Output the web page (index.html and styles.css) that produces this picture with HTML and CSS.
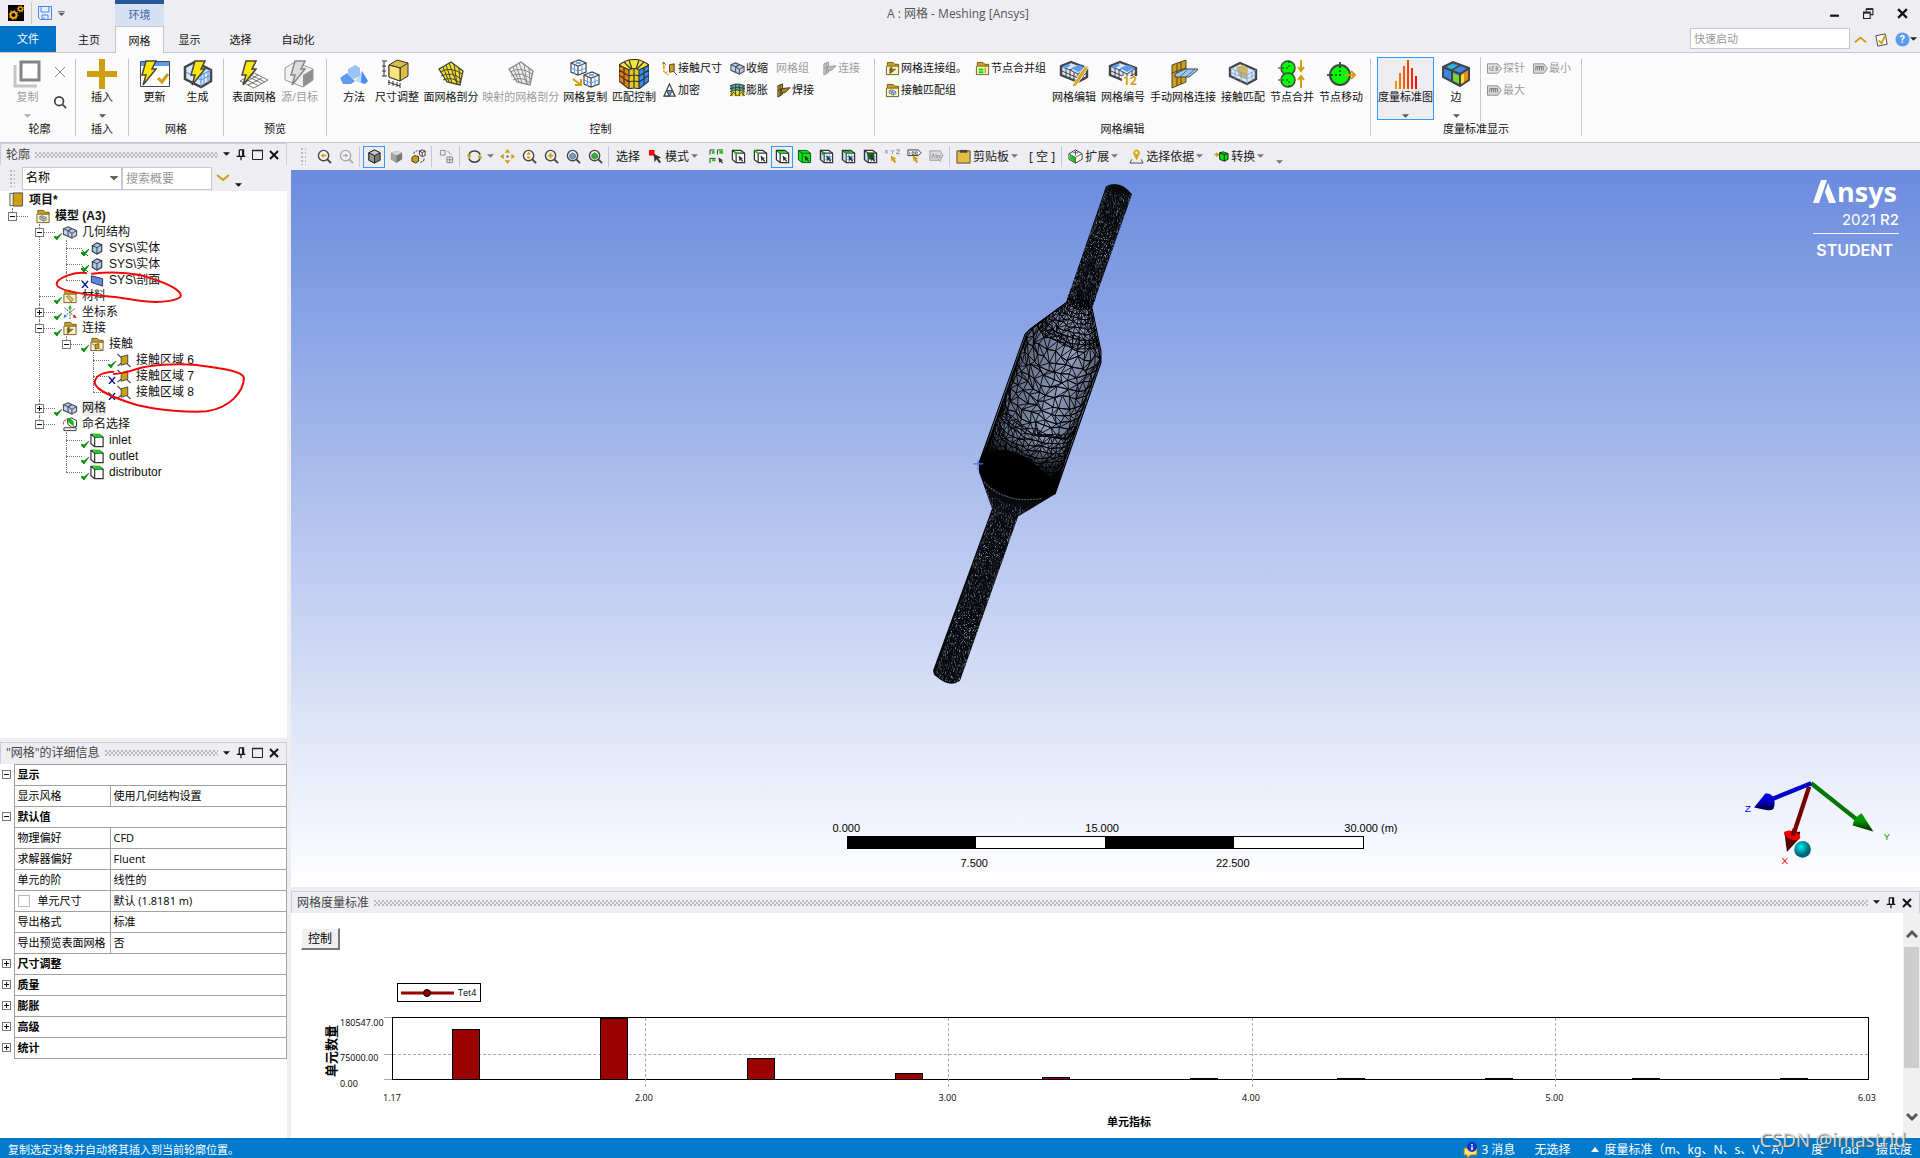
FILE: index.html
```html
<!DOCTYPE html>
<html lang="zh-CN">
<head>
<meta charset="utf-8">
<title>A : 网格 - Meshing [Ansys]</title>
<link rel="stylesheet" href="styles.css">
</head>
<body>
<svg class="defs" aria-hidden="true">
<defs>
<symbol id="caret" viewBox="0 0 8 5"><path d="M0 0h8L4 4z" fill="currentColor"/></symbol>
<symbol id="pin" viewBox="0 0 10 14"><path d="M3 1h5v7M3 1v7M7 1v7M0 8.500h10M5 9v4" fill="none" stroke="#111" stroke-width="1.400"/></symbol>
<symbol id="max" viewBox="0 0 12 12"><path d="M.5 1.500h10v9H.5z" fill="none" stroke="#222"/><path d="M0 1.500h11" stroke="#222" stroke-width="1.500"/></symbol>
<symbol id="x" viewBox="0 0 10 10"><path d="M1 1l8 8M9 1L1 9" stroke="currentColor" stroke-width="2"/></symbol>
<symbol id="bolt" viewBox="0 0 16 26"><path d="M5 1h10l-4 8h4L2 25l3-10H1z" fill="#ffe600" stroke="#444" stroke-width="1.500"/></symbol>
<symbol id="gbolt" viewBox="0 0 16 26"><path d="M5 1h10l-4 8h4L2 25l3-10H1z" fill="#ddd" stroke="#888" stroke-width="1.500"/></symbol>
<symbol id="i-copy" viewBox="0 0 30 30"><path d="M2 6v21h22" fill="none" stroke="#c4c4c4" stroke-width="3"/><path d="M8 3h18v18H8z" fill="#fff" stroke="#848484" stroke-width="3"/></symbol>
<symbol id="i-mag" viewBox="0 0 16 16"><circle cx="7" cy="7" r="5" fill="none" stroke="#444" stroke-width="2"/><path d="M11 11l4 4" stroke="#444" stroke-width="2"/></symbol>
<symbol id="i-plus" viewBox="0 0 30 30"><path d="M12 0h6v12h12v6H18v12h-6V18H0v-6h12z" fill="#cf9f10"/></symbol>
<symbol id="i-update" viewBox="0 0 30 30"><path d="M.5 2.500h29v25H.5z" fill="#fff" stroke="#444"/><path d="M1 3h28v4H1z" fill="#5b9bf0"/><path d="M18 19l4 4 6-8" fill="none" stroke="#cf9f10" stroke-width="3"/><use href="#bolt" x="1" y="1" width="16" height="26"/></symbol>
<symbol id="i-gen" viewBox="0 0 30 30"><path d="M2 8l10-5 16 8v11l-10 6L2 20z" fill="#dce8fb" stroke="#444" stroke-width="2.500"/><path d="M18 15v13M18 16l10-5M21 14v12M25 12v12M18 21l10-5M3 13l15 8" stroke="#4690f0" stroke-width="1"/><use href="#bolt" x="7" y="1" width="16" height="26"/></symbol>
<symbol id="i-surf" viewBox="0 0 30 30"><path d="M1 22l14-8 14 7-14 8zM5 19.500l14 7M9 17.500l14 7M12 16l14 7M5 24l14-8M9 26l14-7" fill="#fff" stroke="#555" stroke-width=".8"/><use href="#bolt" x="2" y="1" width="16" height="26"/></symbol>
<symbol id="i-src" viewBox="0 0 30 30"><path d="M1 9l10-6 18 7v11l-10 7L1 21z" fill="#f1f1f1" stroke="#999"/><path d="M19 16l10-6v11l-10 7z" fill="#909090"/><use href="#gbolt" x="6" y="1" width="16" height="26"/></symbol>
<symbol id="i-method" viewBox="0 0 30 30"><path d="M1 19l7-5 8 8-4 3H4z" fill="#5b9bf0"/><path d="M9 10l7-4 5 3v8l-6 3-6-4z" fill="#9cc2f8"/><path d="M17 22l6-10 6 10-3 3z" fill="#4a8bec"/><path d="M17 22l6-10-1 12z" fill="#c3dafa"/></symbol>
<symbol id="i-size" viewBox="0 0 30 30"><path d="M7 6l8-5 11 3v13l-8 5-11-4z" fill="#d9bd45" stroke="#333"/><path d="M7 6l11 3 8-5M18 9v13" fill="none" stroke="#333"/><path d="M7 6l11 3v13L7 18z" fill="#f8e47a" stroke="#333"/><path d="M2 2v15M0 2h5M0 7h4M0 12h4M0 17h5M6 23l12 4M7 21v5M11 22v5M15 23v5M18 24v5" fill="none" stroke="#333"/></symbol>
<symbol id="i-face" viewBox="0 0 30 30"><path d="M15 3l12 9-3 14-13-3L3 10z" fill="#f2dc1f" stroke="#444" stroke-width="1.300"/><path d="M4 13q11-6 22 2M5 17q11-5 20 3M7 21q9-4 17 3M10 6l6 18M13 4l8 21M7 8l6 15M18 5l3 20M23 9l1 14" fill="none" stroke="#444"/></symbol>
<symbol id="i-gface" viewBox="0 0 30 30"><path d="M15 3l12 9-3 14-13-3L3 10z" fill="#eee" stroke="#888" stroke-width="1.300"/><path d="M4 13q11-6 22 2M5 17q11-5 20 3M7 21q9-4 17 3M10 6l6 18M13 4l8 21M7 8l6 15M18 5l3 20M23 9l1 14" fill="none" stroke="#888"/></symbol>
<symbol id="wire" viewBox="0 0 17 17"><path d="M1 4l8-3 7 3v9l-8 3-7-3z" fill="#fff" stroke="#444" stroke-width="1.200"/><path d="M1 4l7 3 8-3M8 7v9" fill="none" stroke="#444" stroke-width="1.200"/><path d="M1 9l7 3 8-3M4.500 6v9M12 5.500v9M5 2.500l7 3M12 2.500L5 5.500" stroke="#5b9bf0" fill="none"/></symbol>
<symbol id="i-mcopy" viewBox="0 0 30 30"><use href="#wire" width="17" height="17"/><use href="#wire" x="13" y="12" width="17" height="17"/><path d="M3 20l8 6M11 20v6H5" fill="none" stroke="#cf9f10" stroke-width="2"/></symbol>
<symbol id="i-match" viewBox="0 0 30 30"><path d="M0 6l10 5v19L0 22z" fill="#f08010"/><path d="M20 11l10-5v16l-10 8z" fill="#2f8ff0"/><path d="M0 6Q15-5 30 6l-10 5q-5-3-10 0z" fill="#f6e63a"/><path d="M10 11q5-3 10 0v19q-5-2-10 0z" fill="#e3cc20"/><path d="M0 6Q15-5 30 6v16l-10 8q-5-2-10 0L0 22zM0 6l10 5q5-3 10 0l10-5M10 11v19M20 11v19M5 8v18M25 8v18M0 11l10 6q5-2 10 0l10-6M0 16l10 7q5-2 10 0l10-7M15 10v19M5 3l7 7M10 1l3 9M20 1l-3 9M25 3l-7 7" fill="none" stroke="#333" stroke-width="1.200"/></symbol>
<symbol id="s-csize" viewBox="0 0 16 16"><path d="M2 1v10l5 4M0 3h3M1 7h3M3 13l3-2" stroke="#cf9f10" stroke-width="1.500" fill="none" stroke-dasharray="2 1"/><path d="M8 4l5-1v8l-5 1z" fill="#cf9f10" stroke="#444"/><path d="M1 1l3 3M12 11l4 4" stroke="#444"/></symbol>
<symbol id="s-box" viewBox="0 0 16 16"><path d="M1 4l5-2 9 4v5l-5 3-9-4z" fill="#b9d2f5" stroke="#555" stroke-width="1.200"/><path d="M1 4l5 2 4 3 5-3M10 9v5M6 6v6M6 6l4-2" fill="none" stroke="#555" stroke-width="1.200"/></symbol>
<symbol id="s-tri" viewBox="0 0 16 16"><path d="M8 1l6 13H2z" fill="#fff" stroke="#444" stroke-width="1.300"/><path d="M8 14l-3-6h6z" fill="#5b9bf0" stroke="#444"/><path d="M5 9l3 5-5 0M11 9l3 5" stroke="#444" fill="none"/></symbol>
<symbol id="s-infl" viewBox="0 0 16 16"><path d="M0 3q8-4 16 0v5H0z" fill="#56a9a2"/><path d="M0 8h16v6H0z" fill="#efe13c"/><path d="M0 3q8-4 16 0M0 6q8-3 16 0M0 9q8-3 16 0M2 2v12M6 1v13M10 1v13M14 2v12M0 14l4-4 4 4 4-4 4 4" fill="none" stroke="#333" stroke-width=".9"/></symbol>
<symbol id="s-weld" viewBox="0 0 16 16"><path d="M2 3l5-2v11l-5 3z" fill="#cf9f10" stroke="#333"/><path d="M4.500 2v12M2 8l5-2" stroke="#333"/><path d="M6 6l9-1-5 5-5 1z" fill="#b77f13" stroke="#333"/></symbol>
<symbol id="s-gweld" viewBox="0 0 16 16"><path d="M2 3l5-2v11l-5 3z" fill="#ccc" stroke="#999"/><path d="M4.500 2v12M2 8l5-2" stroke="#999"/><path d="M6 6l9-1-5 5-5 1z" fill="#bbb" stroke="#999"/></symbol>
<symbol id="s-folder" viewBox="0 0 16 16"><path d="M2.500 5V1.500h6l2 2h4V6" fill="#cf9f10" stroke="#6d5a20"/><path d="M1.500 5.500h13v9h-13z" fill="#fdf6c4" stroke="#6d5a20"/></symbol>
<symbol id="s-fweld" viewBox="0 0 16 16"><use href="#s-folder"/><use href="#s-weld" x="3" y="6" width="10" height="8"/></symbol>
<symbol id="s-fbox" viewBox="0 0 16 16"><use href="#s-folder"/><use href="#s-box" x="3" y="6" width="10" height="8"/></symbol>
<symbol id="s-fnode" viewBox="0 0 16 16"><use href="#s-folder"/><path d="M4 8h5v2H4zM4 11h5v2H4z" fill="#0d0"/><path d="M11 7v6" stroke="#cf9f10" stroke-width="1.500"/></symbol>
<symbol id="s-fmat" viewBox="0 0 16 16"><use href="#s-folder"/><path d="M4 8l3-1 5 4-3 3z" fill="#e2b27a" stroke="#8a6a42" stroke-width=".7"/></symbol>
<symbol id="s-fcont" viewBox="0 0 16 16"><use href="#s-folder"/><path d="M6 8l4-1v5l-4 1z" fill="#cf9f10" stroke="#333" stroke-width=".7"/><path d="M3 7l2 2M11 12l2 2" stroke="#333"/></symbol>
<symbol id="meshbox" viewBox="0 0 30 24"><path d="M2 6l10-4 16 6v9l-9 5-17-7z" fill="#d9e8fd" stroke="#444" stroke-width="2.400"/><path d="M2 6l9 4 8 4 9-6M19 14v8M11 10v8M11 10l10-5M7 8v8M15 12v8M24 11v8M3 11l16 7 9-5" fill="none" stroke="#444"/><path d="M12 8l8-3 7 3-8 4zM3 7l6-3 3 1-6 4z" fill="#5b9bf0"/></symbol>
<symbol id="i-medit" viewBox="0 0 30 30"><use href="#meshbox" y="1" width="30" height="24"/><path d="M14 25l12-18 3 2-12 18-4 1z" fill="#d9a818" stroke="#fff" stroke-width=".7"/></symbol>
<symbol id="i-mnum" viewBox="0 0 30 30"><use href="#meshbox" y="1" width="30" height="24"/><path d="M14 17h16v10H14z" fill="#fbfbfb"/><text x="15" y="26" class="icon-num">12</text></symbol>
<symbol id="i-manual" viewBox="0 0 30 30"><path d="M4 6l14-5v22L4 29z" fill="#cf9f10" stroke="#444"/><path d="M9 4v23M13 3v22M4 14l14-5" stroke="#444"/><path d="M7 15l10-5h14l-10 8H7z" fill="#9cc6f8" stroke="#444"/><path d="M12 18l8-8M18 18l9-8" stroke="#444" stroke-width=".7"/></symbol>
<symbol id="i-cmatch" viewBox="0 0 30 30"><path d="M2 9l10-5 16 7v9l-9 5-17-8z" fill="#d9e8fd" stroke="#444" stroke-width="2.400"/><path d="M8 8l8-2 4 4-1 10-8-3z" fill="#c7b46a"/><path d="M2 9l17 7 9-5M19 16v9M2 13l17 7 9-5M7 11v9M13 14v9M24 13v9" stroke="#7a9ad0" fill="none" stroke-width=".8"/></symbol>
<symbol id="i-nmerge" viewBox="0 0 30 30"><circle cx="11" cy="9" r="7" fill="#0f0" stroke="#444" stroke-width="1.500"/><circle cx="11" cy="21" r="7" fill="#0f0" stroke="#444" stroke-width="1.500"/><path d="M1 9h11V0M1 21h11v9" fill="none" stroke="#222" stroke-dasharray="2 2"/><path d="M24 1v10M21 8l3 4 3-4M24 29V18M21 21l3-4 3 4" fill="none" stroke="#cf9f10" stroke-width="2"/></symbol>
<symbol id="i-nmove" viewBox="0 0 30 30"><circle cx="14" cy="16" r="10" fill="#0f0" stroke="#444" stroke-width="2"/><path d="M1 16h13V3" fill="none" stroke="#222" stroke-width="1.500" stroke-dasharray="2 2"/><path d="M19 16h9M25 12l4 4-4 4" fill="none" stroke="#cf9f10" stroke-width="2"/></symbol>
<linearGradient id="fire" x1="0" x2="1"><stop offset="0" stop-color="#f79a00"/><stop offset="1" stop-color="#f00"/></linearGradient>
<symbol id="i-chart" viewBox="0 0 30 30"><path d="M4 22h2v8H4zM8 14h2v16H8zM12 7h2v23h-2zM16 1h2v29h-2zM20 9h2v21h-2zM24 17h2v13h-2z" fill="url(#fire)"/></symbol>
<symbol id="i-edge" viewBox="0 0 30 30"><path d="M2 8l10-5 16 6v12l-9 6L2 18z" fill="#3b86e8"/><path d="M4 9l7-4 8 3-7 4z" fill="#30b7d8"/><path d="M12 14l7 3v8l-7-3z" fill="#7bd72e"/><path d="M19 17l4-3v10l-4 2z" fill="#f4e51c"/><path d="M23 14l4-3v10l-4 3z" fill="#f08a1c"/><path d="M2 8l10-5 16 6v12l-9 6L2 18zM2 8l17 7 9-6M19 15v12M11 11v11M11 11l9-5" fill="none" stroke="#444" stroke-width="2"/></symbol>
<symbol id="tag" viewBox="0 0 16 12"><path d="M.5 1h11l4 5-4 5H.5z" fill="#e3e3e3" stroke="#8b8b8b"/><path d="M3 4v4M5 4h2l-2 4h2M9 4h2v4H9M9 6h2" fill="none" stroke="#888"/></symbol>
<symbol id="gtag" viewBox="0 0 16 12"><path d="M.5 1h11l4 5-4 5H.5z" fill="#d9d9d9" stroke="#8b8b8b"/><path d="M3 4v4M5 4v4M7 4v4M9 4v4M11 4v4M3 4h8" fill="none" stroke="#777"/></symbol>
<symbol id="z" viewBox="0 0 16 16"><circle cx="7" cy="7" r="5.500" fill="#f7f7f7" stroke="currentColor" stroke-width="1.500"/><path d="M11 11l4 4" stroke="currentColor" stroke-width="2"/></symbol>
<symbol id="t-zb" viewBox="0 0 16 16"><use href="#z"/><path d="M4 7l3-2.500v1.700h3v1.600H7v1.700z" fill="#cf9f10"/></symbol>
<symbol id="t-zf" viewBox="0 0 16 16"><use href="#z"/><path d="M10 7L7 4.500v1.700H4v1.600h3v1.700z" fill="#aaa"/></symbol>
<symbol id="t-zp" viewBox="0 0 16 16"><use href="#z"/><path d="M7 4v6M4 7h6" stroke="#cf9f10" stroke-width="1.800"/></symbol>
<symbol id="t-zu" viewBox="0 0 16 16"><use href="#z"/><path d="M7 3l2.500 3h-5zM7 11L4.500 8h5z" fill="#cf9f10"/></symbol>
<symbol id="t-zc" viewBox="0 0 16 16"><use href="#z"/><path d="M4 6l3-2 3 2v3l-3 2-3-2z" fill="#6c9fdc" stroke="#333" stroke-width=".6"/></symbol>
<symbol id="t-zg" viewBox="0 0 16 16"><use href="#z"/><path d="M4 6l3-2 3 2v3l-3 2-3-2z" fill="#29bd2b" stroke="#333" stroke-width=".6"/></symbol>
<symbol id="t-cube" viewBox="0 0 16 16"><path d="M2 4l6-3 6 3v8l-6 3-6-3z" fill="#777" stroke="#222"/><path d="M2 4l6 3v8l-6-3z" fill="#999" stroke="#222"/><path d="M2 4l6-3 6 3-6 3z" fill="#c7c7c7" stroke="#222"/></symbol>
<symbol id="t-cube2" viewBox="0 0 16 16"><path d="M2 4l6-2 6 2v7l-6 4-6-4z" fill="#777"/><path d="M2 4l6 3v8l-6-4z" fill="#a2a2a2"/><path d="M2 4l6-2 6 2-6 3z" fill="#d6d6d6"/></symbol>
<symbol id="t-swap" viewBox="0 0 16 16"><path d="M1 9l3-2 4 1v5l-3 2-4-2z" fill="#cf9f10" stroke="#333"/><path d="M9 2l3-1 3 1v5l-3 1-3-2zM9 2l3 2 3-2M12 4v4" fill="#fff" stroke="#333"/><path d="M3 5q0-3 4-3M14 10q0 4-4 4" fill="none" stroke="#333" stroke-dasharray="3 1"/></symbol>
<symbol id="t-exp" viewBox="0 0 16 16"><path d="M1.500 1.500h5v5h-5zM8.500 8.500h6v6h-6zM11.500 8v7M8 11.500h7M9 2l4 4" fill="none" stroke="#888"/></symbol>
<symbol id="t-rot" viewBox="0 0 16 16"><path d="M2 6a6.500 6.500 0 0 1 12 0M14 10a6.500 6.500 0 0 1-12 0" fill="none" stroke="#444" stroke-width="1.600"/><path d="M0 6h4v3H1zM12 7h3l1 3h-4z" fill="#cf9f10"/></symbol>
<symbol id="t-pan" viewBox="0 0 16 16"><path d="M8 0l3 4H5zM8 16l3-4H5zM0 8l4-3v6zM16 8l-4-3v6z" fill="#cf9f10"/><path d="M7 7h2v2H7z" fill="#444"/></symbol>
<symbol id="t-mode" viewBox="0 0 16 16"><path d="M1 1h6v6H1z" fill="#f00"/><path d="M6 5l8 4-3 1 3 4-2 1-3-4-2 3z" fill="#333"/></symbol>
<symbol id="c" viewBox="0 0 16 16"><path d="M1.500 1.500h9l4 3v10h-9l-4-3z" fill="#fff" stroke="#333" stroke-width="1.300"/><path d="M1.500 1.500l4 3h9M5.500 4.500v10" fill="none" stroke="#333" stroke-width="1.300"/></symbol>
<symbol id="ar" viewBox="0 0 16 16"><path d="M8 7l5 3-2 .5 2 2-1 1-2-2-1 1.500z" fill="#333"/></symbol>
<symbol id="t-all" viewBox="0 0 16 16"><path d="M1 6V1h5M9 6V1h6M1 15v-5h6" fill="none" stroke="#333"/><path d="M3 2h3v3H3zM11 2h4v3h-4zM3 11h4v2H3z" fill="#0d0"/><use href="#ar" x="2" y="2"/></symbol>
<symbol id="t-v" viewBox="0 0 16 16"><use href="#c"/><path d="M4 3h3v3H4z" fill="#0c0"/><use href="#ar"/></symbol>
<symbol id="t-e" viewBox="0 0 16 16"><use href="#c"/><path d="M1 1h2l4 4H5z" fill="#0e0"/><use href="#ar"/></symbol>
<symbol id="t-f" viewBox="0 0 16 16"><use href="#c"/><path d="M2 2h8l3 2H5z" fill="#0e0"/><use href="#ar"/></symbol>
<symbol id="t-b" viewBox="0 0 16 16"><path d="M1.500 1.500h9l4 3v10h-9l-4-3z" fill="#0e0" stroke="#143"/><path d="M1.500 1.500l4 3h9M5.500 4.500v10" fill="none" stroke="#143"/><use href="#ar"/></symbol>
<symbol id="mc" viewBox="0 0 16 16"><use href="#c"/><path d="M6 8h8M6 11h8M8.500 5v9M11.500 5v9M3 3v9" stroke="#4690f0" stroke-width=".8"/></symbol>
<symbol id="t-n1" viewBox="0 0 16 16"><use href="#mc"/><path d="M3 3h3v3H3z" fill="#0a0"/><use href="#ar"/></symbol>
<symbol id="t-n2" viewBox="0 0 16 16"><use href="#mc"/><path d="M3 2h8l2 3H6z" fill="#3a3"/><use href="#ar"/></symbol>
<symbol id="t-n3" viewBox="0 0 16 16"><use href="#mc"/><path d="M4 4h8v7H6z" fill="#195e19"/><use href="#ar"/></symbol>
<symbol id="t-xyz" viewBox="0 0 16 16"><path d="M0 1l3 4M3 1L0 5M6 1l2 2 2-2M8 3v2M12 1h4l-4 4h4" fill="none" stroke="#777" stroke-width=".8"/><path d="M6 7l6 3-2 1 2 3-2 1-2-3-1 1z" fill="#cf9f10"/></symbol>
<symbol id="t-tag" viewBox="0 0 16 16"><path d="M1 1h11l3 3-3 3H1z" fill="#fff" stroke="#333"/><path d="M3 3v3M5.500 3h2v3h-2zM9 3h2v3H9z" stroke="#333" stroke-width=".7" fill="none"/><path d="M6 7l6 3-2 1 2 3-2 1-2-3-1 1z" fill="#cf9f10"/></symbol>
<symbol id="t-abc" viewBox="0 0 16 16"><path d="M1 2h11l3 5-3 5H1z" fill="#ddd" stroke="#999"/><path d="M3 10l1.500-5L6 10M7.500 5v4h2V7h-2M13 7h-2v2h2M9 10l4 4" fill="none" stroke="#999"/></symbol>
<symbol id="t-clip" viewBox="0 0 16 16"><path d="M1 2h14v13H1z" fill="#e6bd42" stroke="#444"/><path d="M4 1h8v3H4z" fill="#444"/></symbol>
<symbol id="t-ext" viewBox="0 0 16 16"><path d="M1 5l7-4 7 4v6l-7 4-7-4z" fill="#fff" stroke="#333"/><path d="M2 6l6 3v6l-6-4z" fill="#1c1"/><path d="M1 5l7 4 7-4M8 9v6M8 2v5M5 4h6" fill="none" stroke="#555"/></symbol>
<symbol id="t-by" viewBox="0 0 16 16"><path d="M8 12L5 6a3.500 3.500 0 1 1 6 0z" fill="#d9a818"/><circle cx="8" cy="4" r="1.300" fill="#fff"/><path d="M3 11l-2 4h14l-2-4" fill="none" stroke="#444"/></symbol>
<symbol id="t-conv" viewBox="0 0 16 16"><path d="M0 6h4M2 4l3 2-3 2" stroke="#cf9f10" stroke-width="1.500" fill="none"/><path d="M6 4l4-1 5 2v6l-4 2-5-2z" fill="#0d0" stroke="#222"/><path d="M6 4l5 2 4-1M11 6v7" fill="none" stroke="#222"/></symbol>
<symbol id="ok" viewBox="0 0 8 8"><path d="M0 5l3 3 5-7-5 4-2-1z" fill="#0a8f0a" stroke="#0a8f0a" stroke-width=".7"/></symbol>
<symbol id="okx" viewBox="0 0 8 8"><path d="M0 5l3 3 5-7-5 4-2-1zM1 2l6 6" fill="#0a8f0a" stroke="#0a8f0a"/></symbol>
<symbol id="no" viewBox="0 0 8 8"><path d="M1 1l6 7M7 1L1 8" stroke="#001c8c" stroke-width="1.400"/></symbol>
<symbol id="r-proj" viewBox="0 0 16 16"><path d="M1.500 1.500h13v13h-13z" fill="#f7f1df" stroke="#555"/><path d="M5 1h10v14H5z" fill="#cf9f10" stroke="#555"/></symbol>
<symbol id="r-body" viewBox="0 0 16 16"><path d="M3 5l5-3 5 2v7l-5 3-5-3z" fill="#a9c8f4" stroke="#333" stroke-width="1.200"/><path d="M3 5l5 2 5-3M8 7v7" fill="none" stroke="#333"/></symbol>
<symbol id="r-surf" viewBox="0 0 16 16"><path d="M2 3l12 3v8L2 10z" fill="#5a85e8" stroke="#333"/></symbol>
<symbol id="r-cs" viewBox="0 0 16 16"><path d="M8 1v14M2 3l12 10M2 12l11-8" stroke="#444" stroke-dasharray="2 1"/><path d="M8 0l2 4H6z" fill="#0c0"/><path d="M15 14l-4-1 2-3z" fill="#e11"/><path d="M1 14l1-4 3 2z" fill="#28f"/></symbol>
<symbol id="r-cr" viewBox="0 0 16 16"><path d="M5 4l7-2v9l-7 2z" fill="#cf9f10" stroke="#444"/><path d="M1 1l4 4M11 11l4 4M1 14l4-3" stroke="#444" stroke-width="1.300"/></symbol>
<symbol id="r-ns" viewBox="0 0 16 16"><path d="M5 2l5-1 5 3v6l-5 1-4-3z" fill="#fff" stroke="#222"/><path d="M5 2l3-1 4 4v5l-5-4z" fill="#1b1"/><path d="M1 8q0-5 3-5" stroke="#e22" fill="none"/><path d="M1.500 11.500h13v3h-13z" fill="#fff" stroke="#333"/></symbol>
<symbol id="r-sel" viewBox="0 0 16 16"><use href="#c"/><path d="M3 1h8l3 3H6z" fill="#0d0"/></symbol>
</defs>
</svg>

<header class="top">
  <div class="titlebar">
    <div class="access">
      <svg class="app" viewBox="0 0 16 16"><path d="M0 0h16v16H0z"/><circle cx="5.500" cy="10" r="3" fill="none" stroke="#f5a800" stroke-width="2"/><circle cx="5.500" cy="10" r="4.500" fill="none" stroke="#f5a800" stroke-width="1" stroke-dasharray="1.500 2"/><circle cx="12.500" cy="4" r="2" fill="none" stroke="#f5a800" stroke-width="1.500"/><circle cx="12.500" cy="4" r="3.200" fill="none" stroke="#f5a800" stroke-dasharray="1 1.500"/></svg>
      <span class="vline"></span>
      <button class="plain" aria-label="保存"><svg class="i14" viewBox="0 0 14 14"><path d="M.5.500h13v13H2.500l-2-2zM3 1v5h8V1M4 13V9h6v4M6 11v2" fill="none" stroke="#3f86e8"/></svg></button>
      <button class="plain qa" aria-label="自定义"><svg class="cr" viewBox="0 0 8 6"><path d="M0 0h8v1H0zM0 2h8L4 6z" fill="#555"/></svg></button>
      <div class="context">环境</div>
    </div>
    <div class="title">A : 网格 - Meshing [Ansys]</div>
    <div class="win">
      <button class="plain" aria-label="最小化"><svg viewBox="0 0 10 10"><path d="M1 7h8" stroke="#111" stroke-width="2"/></svg></button>
      <button class="plain" aria-label="还原"><svg viewBox="0 0 10 10"><path d="M.5 4.500h6v5h-6zM3 3V1h6v5H7" fill="none" stroke="#222"/><path d="M0 4h7M3 1h6" stroke="#222" stroke-width="1.500"/></svg></button>
      <button class="plain" aria-label="关闭"><svg><use href="#x"/></svg></button>
    </div>
  </div>
  <div class="tabs">
    <button class="file">文件</button>
    <nav><button>主页</button><button class="on">网格</button><button>显示</button><button>选择</button><button>自动化</button></nav>
    <input class="quick" type="text" placeholder="快速启动" aria-label="快速启动">
    <div class="help">
      <button class="plain" aria-label="折叠"><svg viewBox="0 0 16 16"><path d="M2 11l6-5 6 5" fill="none" stroke="#cf9f10" stroke-width="2"/></svg></button>
      <button class="plain" aria-label="检查"><svg viewBox="0 0 16 16"><path d="M2 4l10-2 2 11-10 2z" fill="#fff" stroke="#444"/><path d="M5 9l3 3 4-8" fill="none" stroke="#cf9f10" stroke-width="2"/></svg></button>
      <button class="plain" aria-label="帮助"><svg viewBox="0 0 16 16"><circle cx="8" cy="8" r="7.500" fill="#5b9bf0"/><text x="5" y="12" class="q">?</text></svg><svg class="cr"><use href="#caret"/></svg></button>
    </div>
  </div>
</header>

<section class="ribbon">
  <div class="group g-outline">
    <div class="items">
      <button class="big off"><svg><use href="#i-copy"/></svg>复制<svg class="cr"><use href="#caret"/></svg></button>
      <div class="stack"><button class="plain" aria-label="删除"><svg class="i10" viewBox="0 0 10 10"><path d="M0 0l10 10M10 0L0 10" stroke="#888"/></svg></button><button class="plain" aria-label="查找"><svg class="i14"><use href="#i-mag"/></svg></button></div>
    </div><h2>轮廓</h2>
  </div>
  <div class="group g-insert"><div class="items"><button class="big"><svg><use href="#i-plus"/></svg>插入<svg class="cr"><use href="#caret"/></svg></button></div><h2>插入</h2></div>
  <div class="group g-mesh"><div class="items"><button class="big"><svg><use href="#i-update"/></svg>更新</button><button class="big"><svg><use href="#i-gen"/></svg>生成</button></div><h2>网格</h2></div>
  <div class="group g-prev"><div class="items"><button class="big"><svg><use href="#i-surf"/></svg>表面网格</button><button class="big off"><svg><use href="#i-src"/></svg>源/目标</button></div><h2>预览</h2></div>
  <div class="group g-ctl"><div class="items">
    <button class="big"><svg><use href="#i-method"/></svg>方法</button><button class="big"><svg><use href="#i-size"/></svg>尺寸调整</button><button class="big"><svg><use href="#i-face"/></svg>面网格剖分</button><button class="big off"><svg><use href="#i-gface"/></svg>映射的网格剖分</button><button class="big"><svg><use href="#i-mcopy"/></svg>网格复制</button><button class="big"><svg><use href="#i-match"/></svg>匹配控制</button>
    <div class="smalls four">
      <button class="small"><svg><use href="#s-csize"/></svg>接触尺寸</button><button class="small"><svg><use href="#s-box"/></svg>收缩</button><button class="small off">网格组</button><button class="small off"><svg><use href="#s-gweld"/></svg>连接</button>
      <button class="small"><svg><use href="#s-tri"/></svg>加密</button><button class="small"><svg><use href="#s-infl"/></svg>膨胀</button><button class="small"><svg><use href="#s-weld"/></svg>焊接</button>
    </div>
  </div><h2>控制</h2></div>
  <div class="group g-edit"><div class="items">
    <div class="smalls two">
      <button class="small"><svg><use href="#s-fweld"/></svg>网格连接组。</button><button class="small"><svg><use href="#s-fnode"/></svg>节点合并组</button>
      <button class="small"><svg><use href="#s-fbox"/></svg>接触匹配组</button>
    </div>
    <button class="big"><svg><use href="#i-medit"/></svg>网格编辑</button><button class="big"><svg><use href="#i-mnum"/></svg>网格编号</button><button class="big"><svg><use href="#i-manual"/></svg>手动网格连接</button><button class="big"><svg><use href="#i-cmatch"/></svg>接触匹配</button><button class="big"><svg><use href="#i-nmerge"/></svg>节点合并</button><button class="big"><svg><use href="#i-nmove"/></svg>节点移动</button>
  </div><h2>网格编辑</h2></div>
  <div class="group g-disp"><div class="items">
    <button class="big pressed"><svg><use href="#i-chart"/></svg>度量标准图<svg class="cr"><use href="#caret"/></svg></button><button class="big"><svg><use href="#i-edge"/></svg>边<svg class="cr"><use href="#caret"/></svg></button>
    <div class="smalls probe">
      <button class="small off"><svg><use href="#tag"/></svg>探针</button><button class="small off"><svg><use href="#gtag"/></svg>最小</button><button class="small off"><svg><use href="#gtag"/></svg>最大</button>
    </div>
  </div><h2>度量标准显示</h2></div>
</section>

<main class="work">
  <aside class="left">
    <section class="outline">
      <div class="head"><h3>轮廓</h3><i class="dots"></i><button class="plain" aria-label="菜单"><svg class="cr"><use href="#caret"/></svg></button><button class="plain" aria-label="固定"><svg class="i12"><use href="#pin"/></svg></button><button class="plain" aria-label="最大化"><svg class="i12"><use href="#max"/></svg></button><button class="plain" aria-label="关闭"><svg class="i10"><use href="#x"/></svg></button></div>
      <div class="filter"><i class="grip"></i><select aria-label="筛选方式"><option>名称</option></select><input type="text" placeholder="搜索概要" aria-label="搜索概要"><button class="plain" aria-label="展开"><svg class="i14" viewBox="0 0 14 14"><path d="M1 4l6 5 6-5" fill="none" stroke="#cf9f10" stroke-width="2"/></svg></button><button class="plain low" aria-label="更多"><svg class="cr"><use href="#caret"/></svg></button></div>
      <div class="treebox">
        <div class="project"><svg><use href="#r-proj"/></svg><b>项目*</b></div>
        <ul class="tree">
          <li><div class="row"><i class="ex m"></i><i class="st"></i><svg><use href="#s-fbox"/></svg><b>模型 (A3)</b></div>
            <ul>
              <li><div class="row"><i class="ex m"></i><i class="st"><svg><use href="#ok"/></svg></i><svg><use href="#s-box"/></svg>几何结构</div>
                <ul>
                  <li><div class="row"><i class="ex"></i><i class="st"><svg><use href="#okx"/></svg></i><svg><use href="#r-body"/></svg>SYS\实体</div></li>
                  <li><div class="row"><i class="ex"></i><i class="st"><svg><use href="#okx"/></svg></i><svg><use href="#r-body"/></svg>SYS\实体</div></li>
                  <li><div class="row"><i class="ex"></i><i class="st"><svg><use href="#no"/></svg></i><svg><use href="#r-surf"/></svg>SYS\剖面</div></li>
                </ul></li>
              <li><div class="row"><i class="ex"></i><i class="st"><svg><use href="#ok"/></svg></i><svg><use href="#s-fmat"/></svg>材料</div></li>
              <li><div class="row"><i class="ex p"></i><i class="st"><svg><use href="#ok"/></svg></i><svg><use href="#r-cs"/></svg>坐标系</div></li>
              <li><div class="row"><i class="ex m"></i><i class="st"><svg><use href="#ok"/></svg></i><svg><use href="#s-fweld"/></svg>连接</div>
                <ul>
                  <li><div class="row"><i class="ex m"></i><i class="st"><svg><use href="#ok"/></svg></i><svg><use href="#s-fcont"/></svg>接触</div>
                    <ul>
                      <li><div class="row"><i class="ex"></i><i class="st"><svg><use href="#ok"/></svg></i><svg><use href="#r-cr"/></svg>接触区域 6</div></li>
                      <li><div class="row"><i class="ex"></i><i class="st"><svg><use href="#no"/></svg></i><svg><use href="#r-cr"/></svg>接触区域 7</div></li>
                      <li><div class="row"><i class="ex"></i><i class="st"><svg><use href="#no"/></svg></i><svg><use href="#r-cr"/></svg>接触区域 8</div></li>
                    </ul></li>
                </ul></li>
              <li><div class="row"><i class="ex p"></i><i class="st"><svg><use href="#ok"/></svg></i><svg><use href="#s-box"/></svg><span class="cur">网格</span></div></li>
              <li><div class="row"><i class="ex m"></i><i class="st"></i><svg><use href="#r-ns"/></svg>命名选择</div>
                <ul>
                  <li><div class="row"><i class="ex"></i><i class="st"><svg><use href="#ok"/></svg></i><svg><use href="#r-sel"/></svg>inlet</div></li>
                  <li><div class="row"><i class="ex"></i><i class="st"><svg><use href="#ok"/></svg></i><svg><use href="#r-sel"/></svg>outlet</div></li>
                  <li><div class="row"><i class="ex"></i><i class="st"><svg><use href="#ok"/></svg></i><svg><use href="#r-sel"/></svg>distributor</div></li>
                </ul></li>
            </ul></li>
        </ul>
        <svg class="marks" viewBox="0 156 900 894"><path d="M258 402C220 396 168 420 170 436C174 456 250 466 320 472C380 476 420 490 470 489C520 487 548 478 542 466C534 446 480 425 420 408C370 398 310 400 276 404M340 698C300 700 284 715 284 732C290 760 370 785 410 798C480 815 570 820 620 817C690 806 730 760 732 716C726 695 660 688 590 678C520 672 450 678 410 690C390 696 370 704 342 705" fill="none" stroke="#f00808" stroke-width="6" stroke-linecap="round"/></svg>
      </div>
    </section>
    <section class="details">
      <div class="head"><h3>"网格"的详细信息</h3><i class="dots"></i><button class="plain" aria-label="菜单"><svg class="cr"><use href="#caret"/></svg></button><button class="plain" aria-label="固定"><svg class="i12"><use href="#pin"/></svg></button><button class="plain" aria-label="最大化"><svg class="i12"><use href="#max"/></svg></button><button class="plain" aria-label="关闭"><svg class="i10"><use href="#x"/></svg></button></div>
      <table>
        <colgroup><col class="c1"><col class="c2"><col></colgroup>
        <tr><td class="e"><i class="ex m"></i></td><th colspan="2">显示</th></tr>
        <tr><td class="e"></td><td>显示风格</td><td>使用几何结构设置</td></tr>
        <tr><td class="e"><i class="ex m"></i></td><th colspan="2">默认值</th></tr>
        <tr><td class="e"></td><td>物理偏好</td><td>CFD</td></tr>
        <tr><td class="e"></td><td>求解器偏好</td><td>Fluent</td></tr>
        <tr><td class="e"></td><td>单元的阶</td><td>线性的</td></tr>
        <tr><td class="e"></td><td><label><input type="checkbox">单元尺寸</label></td><td>默认 (1.8181 m)</td></tr>
        <tr><td class="e"></td><td>导出格式</td><td>标准</td></tr>
        <tr><td class="e"></td><td>导出预览表面网格</td><td>否</td></tr>
        <tr><td class="e"><i class="ex p"></i></td><th colspan="2">尺寸调整</th></tr>
        <tr><td class="e"><i class="ex p"></i></td><th colspan="2">质量</th></tr>
        <tr><td class="e"><i class="ex p"></i></td><th colspan="2">膨胀</th></tr>
        <tr><td class="e"><i class="ex p"></i></td><th colspan="2">高级</th></tr>
        <tr><td class="e"><i class="ex p"></i></td><th colspan="2">统计</th></tr>
      </table>
    </section>
  </aside>

  <div class="right">
    <div class="toolbar">
      <i class="grip"></i>
      <button aria-label="上一视图"><svg><use href="#t-zb"/></svg></button><button class="dim" aria-label="下一视图"><svg><use href="#t-zf"/></svg></button><i class="sep"></i>
      <button class="sel" aria-label="着色带边"><svg><use href="#t-cube"/></svg></button><button aria-label="着色"><svg><use href="#t-cube2"/></svg></button><button aria-label="切换"><svg><use href="#t-swap"/></svg></button><i class="sep"></i>
      <button aria-label="分解"><svg><use href="#t-exp"/></svg></button><i class="sep"></i>
      <button aria-label="旋转"><svg><use href="#t-rot"/></svg></button><button class="tiny" aria-label="旋转选项"><svg class="cr"><use href="#caret"/></svg></button><button aria-label="平移"><svg><use href="#t-pan"/></svg></button><button aria-label="缩放"><svg><use href="#t-zu"/></svg></button><button aria-label="框选缩放"><svg><use href="#t-zp"/></svg></button><button aria-label="适合窗口"><svg><use href="#t-zc"/></svg></button><button aria-label="缩放到选择"><svg><use href="#t-zg"/></svg></button><i class="sep"></i>
      <span class="lbl">选择</span><button class="word"><svg><use href="#t-mode"/></svg>模式<svg class="cr"><use href="#caret"/></svg></button>
      <button aria-label="智能选择"><svg><use href="#t-all"/></svg></button><button aria-label="点"><svg><use href="#t-v"/></svg></button><button aria-label="边"><svg><use href="#t-e"/></svg></button><button class="sel" aria-label="面"><svg><use href="#t-f"/></svg></button><button aria-label="体"><svg><use href="#t-b"/></svg></button><button aria-label="节点"><svg><use href="#t-n1"/></svg></button><button aria-label="单元面"><svg><use href="#t-n2"/></svg></button><button aria-label="单元"><svg><use href="#t-n3"/></svg></button><button aria-label="坐标"><svg><use href="#t-xyz"/></svg></button><button aria-label="标签"><svg><use href="#t-tag"/></svg></button><button aria-label="注释"><svg><use href="#t-abc"/></svg></button><i class="sep"></i>
      <button class="word"><svg><use href="#t-clip"/></svg>剪贴板<svg class="cr"><use href="#caret"/></svg></button><span class="lbl">[ 空 ]</span><i class="sep"></i>
      <button class="word"><svg><use href="#t-ext"/></svg>扩展<svg class="cr"><use href="#caret"/></svg></button><button class="word"><svg><use href="#t-by"/></svg>选择依据<svg class="cr"><use href="#caret"/></svg></button><button class="word"><svg><use href="#t-conv"/></svg>转换<svg class="cr"><use href="#caret"/></svg></button>
      <button class="tiny low" aria-label="更多"><svg class="cr"><use href="#caret"/></svg></button>
    </div>
    <div class="view">
      <svg class="model" viewBox="900 170 280 523" preserveAspectRatio="none" role="img" aria-label="网格模型"></svg>
      <div class="brand">
        <div class="logo"><svg viewBox="0 0 24 23"><path d="M0 23L8 0h6L6 23zM15 3l8 20h-7L12 12z" fill="#fff"/></svg>nsys</div>
        <div class="rel">2021 <b>R2</b></div><div class="stu">STUDENT</div>
      </div>
      <div class="scale">
        <div class="marks3"><span>0.000</span><span>15.000</span><span>30.000 (m)</span></div>
        <div class="bar"><i></i><i></i><i></i><i></i></div>
        <div class="marks2"><span>7.500</span><span>22.500</span></div>
      </div>
      <svg class="triad" viewBox="1020 50 460 280">
        <defs><radialGradient id="ball" cx=".4" cy=".35"><stop offset="0" stop-color="#0ee"/><stop offset="1" stop-color="#067"/></radialGradient><linearGradient id="gr" x1="0" x2="0" y1="0" y2="1"><stop offset=".4" stop-color="#090"/><stop offset="1" stop-color="#020"/></linearGradient><linearGradient id="bl" x1="0" x2="0" y1="0" y2="1"><stop offset=".4" stop-color="#00d"/><stop offset="1" stop-color="#003"/></linearGradient></defs>
        <path d="M1234 72L1370 180" stroke="#070" stroke-width="13"/><path d="M1386 162l35 55-62-18q4-26 27-37z" fill="url(#gr)"/>
        <path d="M1228 82L1182 222" stroke="#700" stroke-width="13"/><path d="M1153 218h48l-4 22-36 39z" fill="#500"/><ellipse cx="1177" cy="229" rx="25" ry="13" fill="#e00" transform="rotate(18 1177 229)"/><path d="M1184 210L1179 230" stroke="#700" stroke-width="13"/>
        <path d="M1234 72L1110 122" stroke="#00c" stroke-width="13"/><path d="M1062 145l34-42q14-3 24 10 8 20 0 36-8 6-22 3z" fill="url(#bl)"/>
        <circle cx="1208" cy="271" r="25" fill="url(#ball)"/>
        <text x="1034" y="158" fill="#00f">Z</text><text x="1145" y="315" fill="#f00">X</text><text x="1452" y="242" fill="#090">Y</text>
      </svg>
    </div>
    <section class="metrics">
      <div class="head"><h3>网格度量标准</h3><i class="dots"></i><button class="plain" aria-label="菜单"><svg class="cr"><use href="#caret"/></svg></button><button class="plain" aria-label="固定"><svg class="i12"><use href="#pin"/></svg></button><button class="plain" aria-label="关闭"><svg class="i10"><use href="#x"/></svg></button></div>
      <div class="mbody">
        <div class="chart">
          <button class="ctl">控制</button>
          <div class="legend"><svg viewBox="0 0 54 10"><path d="M0 5h53" stroke="#900" stroke-width="3"/><circle cx="26" cy="5" r="3.500" fill="#900" stroke="#000"/></svg>Tet4</div>
          <div class="plotrow">
            <div class="ytitle">单元数量</div>
            <div class="yl"><span>180547.00</span><span>75000.00</span><span>0.00</span></div>
            <div class="ticks"><i></i><i></i><i></i></div>
            <div class="plot"></div>
          </div>
          <div class="xtitle">单元指标</div>
        </div>
        <div class="scroll"><svg viewBox="0 0 12 10"><path d="M1 8l5-5 5 5" fill="none" stroke="#555" stroke-width="3"/></svg><i></i><svg viewBox="0 0 12 10"><path d="M1 2l5 5 5-5" fill="none" stroke="#555" stroke-width="3"/></svg></div>
      </div>
    </section>
  </div>
</main>

<footer class="status">
  <span class="hint">复制选定对象并自动将其插入到当前轮廓位置。</span>
  <span class="msg"><svg viewBox="0 0 16 16"><path d="M1 6h13v7H8l-4 3v-3H1z" fill="#ffe27a" stroke="#a57b10"/><circle cx="9" cy="5" r="5" fill="#1234c8"/><path d="M9 2v1.500M9 4.500V8" stroke="#fff" stroke-width="1.600"/></svg>3 消息</span>
  <span class="none">无选择</span>
  <span class="units"><svg viewBox="0 0 8 5"><path d="M0 5h8L4 0z" fill="#fff"/></svg>度量标准（m、kg、N、s、V、A）</span>
  <span class="deg">度</span><span class="rad">rad</span><span>摄氏度</span>
  <span class="credit">CSDN @imastrid</span>
</footer>
<script src="mesh.js"></script>
</body>
</html>
```
FILE: mesh.js
```js
(function () {
  var seed = 7;
  function rnd() { seed = (seed * 16807) % 2147483647; return seed / 2147483647; }
  var A = [1119, 190], d = [-0.337, 0.942], u = [0.942, 0.337], squash = 0.4;
  function radius(t) {
    if (t < 120) return 13.8;
    if (t < 161) return 13.8 + (t - 120) / 41 * 25.2;
    if (t < 304) return 39;
    if (t < 338) return 39 - (t - 304) / 34 * 25.2;
    return 13.8;
  }
  function point(t, a) {
    var r = radius(t), s = t + r * squash * Math.cos(a), w = r * Math.sin(a);
    return [(A[0] + d[0] * s + u[0] * w).toFixed(1), (A[1] + d[1] * s + u[1] * w).toFixed(1)];
  }
  function mesh(t0, t1, step, cols, width, jitter) {
    var rows = [], t = t0, path = '';
    while (t <= t1) {
      var row = [];
      for (var i = 0; i <= cols; i++) {
        var a = -Math.PI / 2 + Math.PI * i / cols;
        var edge = i === 0 || i === cols;
        row.push(point(Math.min(t1, t + (rnd() - 0.5) * step * jitter), edge ? a : a + (rnd() - 0.5) * jitter * Math.PI / cols));
      }
      rows.push(row);
      t += step;
    }
    for (var j = 0; j < rows.length - 1; j++) {
      for (var k = 0; k < cols; k++) {
        var p = rows[j][k], q = rows[j][k + 1], r = rows[j + 1][k], s = rows[j + 1][k + 1];
        path += 'M' + q + 'L' + p + 'L' + r + 'L' + s;
        path += rnd() > 0.5 ? 'M' + p + 'L' + s : 'M' + q + 'L' + r;
      }
    }
    return '<path d="' + path + '" fill="none" stroke="#000" stroke-width="' + width + '"/>';
  }
  function specks(t0, t1, n) {
    var out = { '#77839f': '', '#3d4350': '', '#23272e': '' }, keys = Object.keys(out);
    for (var i = 0; i < n; i++) {
      var p = point(t0 + rnd() * (t1 - t0), (rnd() - 0.5) * 2.5);
      var pick = rnd(), key = keys[pick < 0.22 ? 0 : pick < 0.6 ? 1 : 2];
      out[key] += 'M' + Math.round(p[0]) + ' ' + Math.round(p[1]) + 'h1v1h-1z';
    }
    return keys.map(function (k) { return '<path d="' + out[k] + '" fill="' + k + '"/>'; }).join('');
  }
  var outline = 'M1106 186Q1120 179 1132 194L1092 306L1101 349L1101 360L1055 490L1018 512L960 674Q950 682 934 668L933 664L992 504L979 468L979 459L1025 332L1030 327L1066 301Z';
  document.querySelector('.model').innerHTML =
    '<defs><linearGradient id="skin" gradientUnits="userSpaceOnUse" x1="1004" y1="395" x2="1078" y2="421"><stop offset="0" stop-color="#566077"/><stop offset=".65" stop-color="#929dbd"/><stop offset="1" stop-color="#59637c"/></linearGradient>' +
    '<linearGradient id="shade" gradientUnits="userSpaceOnUse" x1="1031" y1="435" x2="1020" y2="466"><stop offset="0" stop-opacity="0"/><stop offset="1" stop-opacity="1"/></linearGradient>' +
    '<clipPath id="hull"><path d="' + outline + '"/></clipPath></defs>' +
    '<path d="' + outline + '" fill="#090a0d"/><g clip-path="url(#hull)">' +
    '<path d="M1066 301L1030 327L1025 332L981 453Q1015 430 1057 484L1101 360V349L1092 306Q1078 312 1066 301Z" fill="url(#skin)"/>' +
    mesh(106, 150, 4, 14, 0.9, 0.6) + mesh(142, 245, 8, 14, 0.9, 0.7) + mesh(235, 292, 5, 20, 0.9, 0.7) +
    '<path d="M993 420L981 453L979 468Q1000 500 1055 490L1070 447Z" fill="url(#shade)"/>' +
    specks(-3, 118, 1150) + specks(345, 508, 1500) + specks(316, 345, 260) + '</g>' +
    '<ellipse cx="1017" cy="474" rx="38" ry="19" transform="rotate(20 1017 474)"/>' +
    '<path d="M984 478Q1005 500 1042 494" fill="none" stroke="#5b667e" stroke-dasharray="2 1"/>' +
    '<path d="M1066 301L1030 327L1025 332L979 459M1092 306L1101 349V360L1055 490" fill="none" stroke="#000"/>' +
    '<path d="M973 460h10M978 456v10" stroke="#4d77dc"/>';

  var plot = document.querySelector('.plot'), html = '';
  var counts = [148000, 180547, 62000, 18000, 6500, 3000, 2600, 2600, 2600, 2600];
  [2, 3, 4, 5].forEach(function (v) {
    html += '<i class="grid" style="left:' + (v - 1.17) / 4.86 * 100 + '%"></i>';
  });
  html += '<i class="half"></i>';
  counts.forEach(function (c, i) {
    html += '<i class="col" style="left:' + (4 + i * 10) + '%;height:' + c / 180547 * 100 + '%"></i>';
  });
  [1.17, 2, 3, 4, 5, 6.03].forEach(function (v) {
    html += '<span style="left:' + (v - 1.17) / 4.86 * 100 + '%">' + v.toFixed(2) + '</span>';
  });
  plot.innerHTML = html;
})();
```
FILE: styles.css
```css
* { box-sizing: border-box; }
html, body { height: 100%; margin: 0; }
body { display: flex; flex-direction: column; background: #eeeef2; color: #111; font: 11px/16px "Open Sans", "Noto Sans CJK SC", sans-serif; overflow: hidden; }
button { font: inherit; color: inherit; border: 0; padding: 0; margin: 0; background: none; white-space: nowrap; }
h2, h3, ul { margin: 0; padding: 0; font-weight: normal; font-size: inherit; }
i { font-style: normal; display: block; flex: none; }
svg { display: block; flex: none; }
.defs { position: absolute; width: 0; height: 0; }
.plain { display: flex; align-items: center; justify-content: center; }
.i10 { width: 10px; height: 10px; }
.i12 { width: 12px; height: 12px; }
.i14 { width: 14px; height: 14px; }
svg.cr { width: 7px; height: 5px; color: #555; }
.icon-num { font: bold 12px Roboto, sans-serif; fill: #cf9f10; }
.q { font: bold 11px Roboto, sans-serif; fill: #fff; }

.titlebar { display: grid; grid-template-columns: 1fr auto 1fr; align-items: center; height: 26px; padding: 0 12px 0 8px; }
.access { display: flex; align-items: center; align-self: stretch; }
.app { width: 16px; height: 16px; }
.vline { width: 1px; height: 22px; margin: 0 6px 0 7px; background: #c8c8d0; }
.qa { margin-left: 6px; }
.context { align-self: stretch; width: 49px; margin-left: 50px; padding-top: 3px; border-top: 4px solid #2b579a; background: #d5e0f2; color: #3f66a8; text-align: center; }
.title { font-size: 12px; color: #555; padding-top: 2px; }
.win { display: flex; gap: 23px; justify-content: flex-end; }
.win svg { width: 11px; height: 11px; }
.tabs { display: flex; height: 27px; border-bottom: 1px solid #c6c6ca; }
.file { width: 56px; background: #0072c6; color: #fff; }
.tabs nav { display: flex; margin-left: 7px; flex: 1; }
.tabs nav button { width: 51px; padding-top: 2px; }
.tabs nav button:first-child { width: 52px; }
.tabs nav button:last-child { width: 64px; }
.tabs nav .on { height: 27px; width: 49px; border: 1px solid #c6c6ca; border-bottom: 0; background: #fbfbfb; }
.quick { width: 160px; height: 21px; margin-top: 2px; border: 1px solid #c6c6da; background: #fff; font: inherit; padding: 2px 3px; }
input::placeholder { color: #999; opacity: 1; }
.help { display: flex; gap: 6px; padding: 0 3px; }
.help svg { width: 15px; height: 15px; }
.help svg.cr { width: 7px; height: 5px; color: #222; }

.ribbon { display: flex; height: 90px; padding: 5px 0 6px; background: #fbfbfb; border-bottom: 1px solid #c6c6ca; flex: none; }
.group { display: flex; flex-direction: column; border-right: 1px solid #c6c6ca; padding: 0 6px; height: 77px; margin-top: 1px; }
.group h2 { text-align: center; }
.items { display: flex; gap: 5px; height: 62px; flex: none; justify-content: center; }
.big { display: flex; flex-direction: column; align-items: center; justify-content: flex-start; min-width: 30px; height: 61px; }
.big svg { width: 30px; height: 30px; }
.big svg.cr { width: 7px; height: 5px; margin-top: 9px; }
.off { color: #9b9b9b; }
.off svg.cr { color: #aaa; }
.stack { display: flex; flex-direction: column; gap: 18px; padding: 8px 0 0 5px; align-items: center; }
.g-outline { width: 76px; padding-right: 2px; }
.g-insert { width: 53px; }
.g-mesh { width: 95px; }
.g-mesh .items { gap: 13px; }
.g-prev { width: 103px; }
.g-ctl { width: 548px; }
.g-ctl .items, .g-edit .items, .g-disp .items { justify-content: flex-start; }
.g-ctl .items { padding-left: 6px; gap: 7px; }
.g-edit { width: 496px; }
.g-edit .items { padding-left: 4px; }
.smalls { display: grid; grid-auto-rows: 22px; align-content: start; margin-top: -2px; }
.four { grid-template-columns: 68px 46px 46px 46px; }
.two { grid-template-columns: 90px 72px; }
.small { display: flex; align-items: center; gap: 1px; }
.small svg { width: 15px; height: 15px; }
.g-disp { width: 211px; }
.g-disp .items { gap: 7px; }
.g-disp .pressed { width: 60px; border: 1px solid #3399ff; background: #eeeef2; padding-top: 1px; margin-top: -2px; height: 63px; }
.probe { grid-template-columns: 46px 42px; border-left: 1px solid #c6c6da; margin-left: 2px; padding-left: 6px; }

.work { flex: 1; display: flex; gap: 4px; min-height: 0; }
.left { width: 287px; flex: none; display: grid; grid-template-rows: 3fr 2fr; gap: 4px; min-height: 0; }
.left > section { background: #fff; min-height: 0; }
.head { display: flex; align-items: center; height: 22px; padding: 0 7px 0 5px; gap: 5px; background: #eeeef2; border: 1px solid #ccccdc; border-bottom: 0; }
.head h3 { font-size: 12px; color: #444; white-space: nowrap; }
.head svg.cr { color: #111; }
.dots { flex: 1; height: 6px; background: radial-gradient(circle at 1px 1px, #bcbcbc 1px, transparent 1px) 0 0 / 4px 4px, radial-gradient(circle at 1px 1px, #bcbcbc 1px, transparent 1px) 2px 2px / 4px 4px; }
.grip { width: 5px; height: 17px; background: radial-gradient(circle at 1px 1px, #bbb 1px, transparent 1px) 0 0 / 4px 4px; }
.filter { display: flex; align-items: center; height: 26px; background: #eeeef2; padding-left: 10px; font-size: 12px; }
.filter select { appearance: none; width: 100px; height: 23px; margin-left: 7px; padding: 0 3px; font: inherit; border: 1px solid #c6c6da; border-radius: 0; background: conic-gradient(from -45deg at 50% 100%, #666 90deg, transparent 0) right 3px center / 8px 4px no-repeat #fff; }
.filter input { width: 90px; height: 23px; font: inherit; border: 1px solid #c6c6da; padding: 0 3px; border-radius: 0; margin-right: 4px; }
.low { align-self: flex-end; padding-bottom: 3px; margin-left: 5px; }
.low svg.cr { color: #111; }
.treebox { position: relative; padding-top: 1px; font: 12px/16px "Liberation Sans", "Noto Sans CJK SC", sans-serif; }
.project { display: flex; gap: 5px; padding-left: 8px; height: 16px; }
.project svg { width: 16px; height: 15px; }
.tree, .tree ul { list-style: none; }
.tree ul { padding-left: 27px; }
.tree li { position: relative; }
.tree li::before { content: ""; position: absolute; left: 12px; top: 0; bottom: 0; border-left: 1px dotted #777; }
.tree li:last-child::before { bottom: auto; height: 8px; }
.row { display: flex; align-items: center; height: 16px; position: relative; white-space: nowrap; }
.row::before { content: ""; position: absolute; left: 12px; top: 8px; width: 16px; border-top: 1px dotted #777; }
.row > svg { width: 16px; height: 15px; margin-right: 4px; }
.ex { width: 24px; height: 9px; position: relative; }
.ex.m, .ex.p { width: 9px; margin: 0 7px 0 8px; border: 1px solid #777; background: linear-gradient(#111, #111) center / 5px 1px no-repeat #fff; }
.ex.p { background: linear-gradient(#111, #111) center / 5px 1px no-repeat, linear-gradient(#111, #111) center / 1px 5px no-repeat #fff; }
.st { width: 11px; align-self: flex-end; position: relative; }
.st svg { width: 8px; height: 8px; margin-left: 3px; }
.cur { background: #eee; }
.marks { position: absolute; left: 0; top: 0; width: 300px; height: 298px; }

table { width: 100%; border-collapse: collapse; table-layout: fixed; }
.c1 { width: 14px; }
.c2 { width: 96px; }
td, th { height: 21px; padding: 0 3px; border: 1px solid #a0a0a0; text-align: left; line-height: 16px; color: #000; white-space: nowrap; }
td.e { border: 0; padding: 0 0 0 2px; }
td .ex.m, td .ex.p { margin: 0; }
td label { display: flex; align-items: center; gap: 8px; }
td input { appearance: none; width: 12px; height: 12px; margin: 0; border: 1px solid #bbb; background: #fff; }

.right { flex: 1; display: flex; flex-direction: column; min-width: 0; }
.toolbar { display: flex; align-items: center; height: 27px; padding-left: 10px; font-size: 12px; flex: none; }
.toolbar .grip { margin-right: 7px; }
.toolbar button { width: 22px; height: 22px; display: flex; align-items: center; justify-content: center; color: #444; }
.toolbar svg { width: 15px; height: 15px; }
.toolbar svg.cr { width: 7px; height: 5px; color: #777; }
.toolbar .dim { color: #aaa; }
.toolbar .sel { border: 1px solid #3399ff; }
.toolbar .tiny { width: 11px; }
.toolbar .word { width: auto; color: #222; gap: 2px; padding: 0 6px 0 4px; margin-right: 1px; }
.toolbar .low { height: 12px; margin-left: 3px; }
.sep { width: 1px; height: 21px; margin: 0 3px 0 2px; background: #c6c6da; }
.lbl { padding: 0 4px; white-space: nowrap; }
.sep + .word { padding-left: 3px; }

.view { flex: 1; position: relative; background: linear-gradient(#6b8bde, #fff); min-height: 0; overflow: hidden; }
.model { position: absolute; left: calc(50% - 206px); top: 0; width: 280px; height: 530px; }
.brand { position: absolute; top: 8px; right: 21px; width: 86px; color: #fff; font-family: Inter, sans-serif; text-align: right; }
.logo { display: flex; font: bold 27px/28px "Open Sans", sans-serif; }
.logo svg { width: 24px; height: 23px; margin-top: 2px; }
.rel { font-size: 15px; line-height: 18px; padding: 5px 0 4px; border-bottom: 1px solid #fff; }
.rel b { font-weight: 500; }
.stu { font-size: 16px; font-weight: 600; line-height: 20px; padding: 6px 6px 0 0; }
.scale { position: absolute; left: calc(50% - 259px); bottom: 16px; width: 517px; color: #000; font-family: "Liberation Sans", sans-serif; }
.marks3, .marks2 { display: flex; justify-content: space-between; }
.marks3 { margin: 0 -34px 0 -14px; }
.marks2 { justify-content: space-around; padding-top: 6px; }
.bar { display: flex; height: 13px; border: 1px solid #000; }
.bar i { flex: 1; background: #fff; }
.bar i:nth-child(odd) { background: #000; }
.triad { position: absolute; right: 27px; bottom: 18px; width: 153px; height: 93px; font: 30px "Liberation Sans", sans-serif; }

.metrics { margin-top: 4px; background: #fff; flex: none; }
.mbody { display: flex; }
.chart { flex: 1; padding: 15px 34px 8px 10px; min-width: 0; }
.ctl { display: block; width: 39px; height: 22px; background: #f0f0f0; border: solid; border-width: 1px 2px 2px 1px; border-color: #fff #777 #777 #fff; font-size: 12px; color: #000; }
.legend { display: flex; align-items: center; gap: 3px; width: 84px; height: 19px; margin: 33px 0 0 96px; padding-left: 3px; border: 1px solid #000; font-size: 9px; color: #000; }
.legend svg { width: 54px; height: 10px; }
.plotrow { display: flex; height: 63px; margin: 15px 0 0 21px; font-size: 9px; line-height: 12px; color: #000; }
.ytitle { writing-mode: vertical-rl; text-orientation: sideways; transform: rotate(180deg); font-size: 13px; line-height: 18px; font-weight: bold; height: 60px; width: 18px; white-space: nowrap; }
.yl { width: 44px; display: flex; flex-direction: column; height: 74px; }
.yl span:nth-child(2) { margin: 23px 0 14px; }
.ticks { width: 8px; display: flex; flex-direction: column; }
.ticks i { border-top: 1px solid #aaa; height: 37px; }
.ticks i:nth-child(2) { height: 25px; }
.plot { flex: 1; position: relative; border: 1px solid #000; }
.plot i { position: absolute; }
.grid { top: 0; bottom: -8px; border-left: 1px dashed #aaa; }
.half { left: 0; right: 0; top: 59%; border-top: 1px dashed #aaa; }
.col { bottom: 0; width: 28px; background: #900; border: 1px solid #000; border-bottom: 0; }
.plot span { position: absolute; top: 74px; width: 40px; margin-left: -21px; text-align: center; }
.xtitle { text-align: center; font-weight: bold; margin-top: 34px; padding-left: 88px; color: #000; }
.scroll { width: 17px; background: #f0f0f0; display: flex; flex-direction: column; align-items: center; padding: 16px 1px; gap: 8px; }
.scroll svg { width: 12px; height: 10px; }
.scroll i { width: 15px; flex: 1; background: #cdcdcd; margin-bottom: 36px; }

.status { display: flex; align-items: center; height: 20px; flex: none; padding: 3px 8px 0; background: #007acc; color: #fff; font: 12px/16px "Noto Sans", "Noto Sans CJK SC", sans-serif; position: relative; white-space: nowrap; }
.hint { flex: 1; font-size: 11px; }
.msg, .units { display: flex; align-items: center; gap: 2px; }
.msg svg { width: 16px; height: 16px; }
.units svg { width: 8px; height: 5px; margin-right: 3px; }
.none { margin: 0 21px 0 19px; }
.deg { margin-left: 20px; }
.rad { margin: 0 17px; }
.credit { position: absolute; right: 14px; bottom: 7px; font: 19px/22px "Noto Sans", sans-serif; color: #ddd; text-shadow: 1px 1px 1px #555; opacity: .9; }
```
